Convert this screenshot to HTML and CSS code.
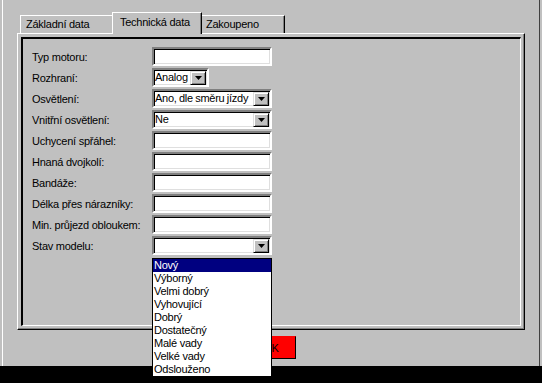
FILE: index.html
```html
<html>
<head>
  <title>Technická data</title>
  <meta charset="utf-8">
  <link rel="stylesheet" href="styles.css">
</head>
<body>

<div class="window">
  <div class="tabs">
    <div class="tab tab-basic">Základní data</div>
    <div class="tab tab-tech active">Technická data</div>
    <div class="tab tab-bought">Zakoupeno</div>
  </div>

  <div class="panel">
    <div class="frame">
      <div class="form">
        <label>Typ motoru:</label>
        <div class="field"></div>

        <label>Rozhraní:</label>
        <div class="combo combo-short"><span class="combo-text">Analog</span><span class="combo-btn"><svg width="7" height="4" viewBox="0 0 7 4"><path d="M0 0h7L3.5 4z" fill="#000"/></svg></span></div>

        <label>Osvětlení:</label>
        <div class="combo"><span class="combo-text">Ano, dle směru jízdy</span><span class="combo-btn"><svg width="7" height="4" viewBox="0 0 7 4"><path d="M0 0h7L3.5 4z" fill="#000"/></svg></span></div>

        <label>Vnitřní osvětlení:</label>
        <div class="combo"><span class="combo-text">Ne</span><span class="combo-btn"><svg width="7" height="4" viewBox="0 0 7 4"><path d="M0 0h7L3.5 4z" fill="#000"/></svg></span></div>

        <label>Uchycení spřáhel:</label>
        <div class="field"></div>

        <label>Hnaná dvojkolí:</label>
        <div class="field"></div>

        <label>Bandáže:</label>
        <div class="field"></div>

        <label>Délka přes nárazníky:</label>
        <div class="field"></div>

        <label>Min. průjezd obloukem:</label>
        <div class="field"></div>

        <label>Stav modelu:</label>
        <div class="combo open">
          <span class="combo-text"></span><span class="combo-btn"><svg width="7" height="4" viewBox="0 0 7 4"><path d="M0 0h7L3.5 4z" fill="#000"/></svg></span>
          <ul class="dropdown">
            <li class="selected">Nový</li>
            <li>Výborný</li>
            <li>Velmi dobrý</li>
            <li>Vyhovující</li>
            <li>Dobrý</li>
            <li>Dostatečný</li>
            <li>Malé vady</li>
            <li>Velké vady</li>
            <li>Odslouženo</li>
          </ul>
        </div>
      </div>
    </div>
  </div>

  <div class="actions">
    <button class="btn-red">OK</button>
  </div>
</div>

</body>
</html>
```

FILE: styles.css
```css
* { box-sizing: border-box; }
html, body { margin: 0; padding: 0; }
body { background: #000; font-family: "Liberation Sans", Arial, sans-serif; font-size: 11px; letter-spacing: -0.25px; color: #000; }

.window { height: 366px; background: #c0c0c0; padding: 12px 0 0 17px;
  box-shadow: inset 2px 0 0 #c0c0c0, inset 3px 0 0 #fff, inset -2px 0 0 #c0c0c0, inset -3px 0 0 #404040; }

/* tabs */
.tabs { display: flex; align-items: flex-end; height: 21px; padding-left: 3px; }
.tab { height: 18px; padding: 1px 0 0 5px; line-height: 15px; white-space: nowrap; background: #c0c0c0;
  border-top: 1px solid #fff; border-left: 1px solid #fff; border-right: 1px solid #000; box-shadow: inset -1px 0 0 #808080; }
.tab-basic { width: 94px; }
.tab-tech { width: 90px; margin-left: -2px; }
.tab-bought { width: 85px; margin-left: -2px; padding-left: 5px; }
.tab.active { height: 22px; margin-bottom: -1px; padding: 2px 0 0 7px; position: relative; z-index: 1; }

/* panel */
.panel { width: 508px; height: 297px; display: flex; flex-direction: column; padding: 3px;
  border: 1px solid; border-color: #fff #000 #000 #fff; box-shadow: inset -1px -1px 0 #808080; }
.frame { flex: 1; border-style: solid; border-width: 2px 1px 1px 2px; border-color: #000 #fff #fff #000; }

.form { display: grid; grid-template-columns: 120px 120px; grid-auto-rows: 19px; row-gap: 2px; padding: 8px 0 0 9px; }
.form label { display: flex; align-items: center; white-space: nowrap; }

.field, .combo { height: 19px; background: #fff; border: 2px solid; border-color: #808080 #fff #fff #808080;
  box-shadow: inset 1px 1px 0 #000, inset -1px -1px 0 #dfdfdf; }
.combo { display: flex; align-items: stretch; }
.combo-short { width: 57px; }
.combo-text { flex: 1; padding-left: 1px; line-height: 15px; white-space: nowrap; overflow: hidden; word-spacing: -0.5px; }
.combo-btn { width: 16px; flex: none; margin: 1px 1px 0 0; display: flex; align-items: center; justify-content: center; background: #c0c0c0;
  border: 1px solid; border-color: #dfdfdf #000 #000 #dfdfdf; box-shadow: inset 1px 1px 0 #fff, inset -1px -1px 0 #808080; }

.combo.open { position: relative; }
.dropdown { position: absolute; left: -2px; top: 20px; width: 120px; margin: 0; padding: 0; list-style: none;
  background: #fff; border: 1px solid #000; z-index: 2; }
.dropdown li { height: 13px; line-height: 13px; padding-left: 1px; white-space: nowrap; }
.dropdown li.selected { background: #000080; color: #fff; }

/* bottom */
.actions { width: 508px; display: flex; justify-content: center; margin-top: 6px; }
.btn-red { width: 49px; height: 23px; padding: 0; background: #ff0000; color: #000; font: inherit;
  border: 1px solid; border-color: #ff0000 #000 #000 #ff0000; }
```
